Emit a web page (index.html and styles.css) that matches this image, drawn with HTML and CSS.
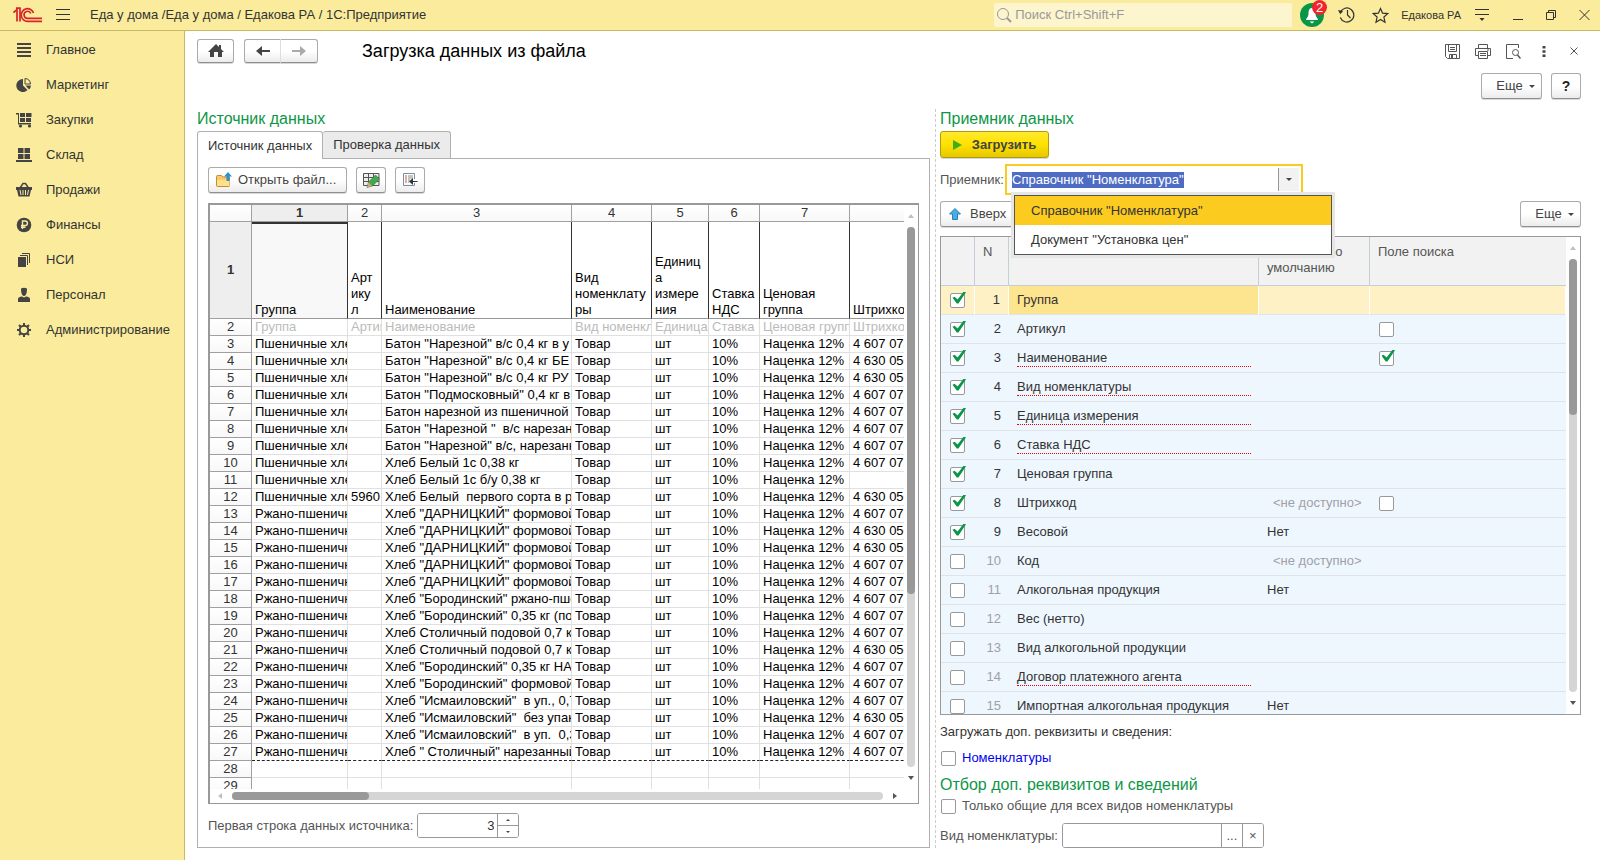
FILE: index.html
```html
<!DOCTYPE html>
<html lang="ru">
<head>
<meta charset="utf-8">
<title>Загрузка данных из файла</title>
<link rel="stylesheet" href="styles.css">
</head>
<body>
<header class="topbar">
  <svg class="logo" width="30" height="16" viewBox="0 0 30 16" fill="none" stroke="#d8232a" stroke-width="1.700"><path d="M.5 5.500 4 2.500V14.500M3 1.200H7V14.500"/><path d="M20.500 6A6.300 6.300 0 1 0 14.800 14.300H29M17.800 6.500A3.500 3.500 0 1 0 14.800 11.300H29"/></svg>
  <button class="plain burger" aria-label="Меню"><svg width="14" height="12" viewBox="0 0 14 12" stroke="#333"><path d="M0 .5H14M0 5.500H14M0 10.500H14"/></svg></button>
  <span class="app-title">Еда у дома /Еда у дома / Едакова РА / 1С:Предприятие</span>
  <label class="search">
    <svg width="16" height="16" viewBox="0 0 16 16" fill="none" stroke="#999"><circle cx="7" cy="7" r="5.500"/><path d="M11 11 15 15" stroke-width="2"/></svg>
    <input type="text" placeholder="Поиск Ctrl+Shift+F" aria-label="Поиск">
  </label>
  <button class="plain bell" aria-label="Оповещения"><svg width="24" height="24" viewBox="0 0 24 24"><circle cx="12" cy="12" r="12" fill="#0a9648"/><path d="M12 5C9 5 8.500 8 8.500 11 8.500 14 6 15 6 17H18C18 15 15.500 14 15.500 11 15.500 8 15 5 12 5ZM9.500 18.500H14.500L12 20.500Z" fill="#fff"/></svg><span class="badge">2</span></button>
  <button class="plain tb-history" aria-label="История"><svg width="18" height="18" viewBox="0 0 18 18" fill="none" stroke="#333" stroke-width="1.200"><path d="M2.300 6.500A7 7 0 1 1 2.300 11.500M9.500 4V9L12.500 12"/><path d="M0 4 5.200 5 2.200 8.200Z" fill="#333" stroke="none"/></svg></button>
  <button class="plain tb-star" aria-label="Избранное"><svg width="17" height="17" viewBox="0 0 17 17" fill="none" stroke="#333" stroke-width="1.200"><path d="M8.500 1.500 10.600 6.200 15.700 6.600 11.900 10 13 15.200 8.500 12.500 4 15.200 5.100 10 1.300 6.600 6.400 6.200Z"/></svg></button>
  <span class="user">Едакова РА</span>
  <button class="plain tb-service" aria-label="Сервис"><svg width="16" height="14" viewBox="0 0 16 14"><path d="M1 1.500H15M1 6.500H15" stroke="#333"/><path d="M5.500 10H10.500L8 13Z" fill="#333"/></svg></button>
  <button class="plain tb-win" aria-label="Свернуть"><svg width="10" height="10" viewBox="0 0 10 10" stroke="#333"><path d="M0 9.500H10"/></svg></button>
  <button class="plain tb-win" aria-label="Восстановить"><svg width="10" height="10" viewBox="0 0 10 10" fill="none" stroke="#333"><path d="M.5 2.500H7.500V9.500H.5ZM2.500 2.500V.5H9.500V7.500H7.500"/></svg></button>
  <button class="plain tb-win" aria-label="Закрыть"><svg width="11" height="10" viewBox="0 0 11 10" stroke="#333"><path d="M.5 0 10.500 10M10.500 0 .5 10"/></svg></button>
</header>
<div class="shell">
  <nav class="sidebar">
    <a href="#"><svg width="16" height="16" viewBox="0 0 16 16" stroke="#444" stroke-width="2"><path d="M1 2H15M1 6H15M1 10H15M1 14H15"/></svg>Главное</a>
    <a href="#"><svg width="16" height="16" viewBox="0 0 16 16" fill="#444"><path d="M7 2V8.500L11.500 13A6.500 6.500 0 1 1 7 2Z"/><path d="M9 7V1.500A6 6 0 0 1 14.500 7Z" fill="none" stroke="#444"/><path d="M9.500 8.500H15A6 6 0 0 1 13 12.500Z"/></svg>Маркетинг</a>
    <a href="#"><svg width="16" height="16" viewBox="0 0 16 16" fill="#444"><path d="M0 1H3V11H15V12.500H2V2.500H0Z"/><path d="M4 1H9V5H4ZM10 1H15.500V5H10ZM4 6H9V10H4ZM10 6H15V10H10Z"/><circle cx="4.500" cy="14" r="1.600"/><circle cx="13.500" cy="14" r="1.600"/></svg>Закупки</a>
    <a href="#"><svg width="16" height="16" viewBox="0 0 16 16" fill="#444"><path d="M2 1H7.500V6H2ZM8.500 1H14V6H8.500ZM2 7H7.500V12H2ZM8.500 7H14V12H8.500ZM0 13H16V15H0Z"/></svg>Склад</a>
    <a href="#"><svg width="16" height="16" viewBox="0 0 16 16"><path d="M4 6 7 1.500H9.500L12.500 6" fill="none" stroke="#444" stroke-width="1.500"/><path d="M0 5H16V8H15L13.500 14.500H2.500L1 8H0Z" fill="#444"/><path d="M4 8 5 13M7 8V13M9.500 8V13M12.500 8 11.500 13" stroke="#faec9c"/></svg>Продажи</a>
    <a href="#"><svg width="16" height="16" viewBox="0 0 16 16"><circle cx="8" cy="8" r="7.300" fill="#444"/><path d="M6.500 12V4H9.200A2.200 2.200 0 0 1 9.200 8.500H5M5 10.300H9.500" fill="none" stroke="#faec9c" stroke-width="1.400"/></svg>Финансы</a>
    <a href="#"><svg width="16" height="16" viewBox="0 0 16 16"><path d="M2 5H10V15H2Z" fill="#444"/><path d="M4 3.500H11.500V13M6 1.500H13.500V11" fill="none" stroke="#444"/></svg>НСИ</a>
    <a href="#"><svg width="16" height="16" viewBox="0 0 16 16" fill="#444"><path d="M5 1.500Q8 0 11 1.500L10.800 5Q10 9 8 9 6 9 5.200 5ZM2 15V12Q2 10 6 9.500L8 10.500 10 9.500Q14 10 14 12V15Z"/></svg>Персонал</a>
    <a href="#"><svg width="16" height="16" viewBox="0 0 16 16" fill="none" stroke="#444"><circle cx="8" cy="8" r="4.300" stroke-width="2"/><path d="M8 1V4M8 12V15M1 8H4M12 8H15M3 3 5 5M11 11 13 13M13 3 11 5M5 11 3 13" stroke-width="2"/></svg>Администрирование</a>
  </nav>
  <main class="page">
    <div class="page-head">
      <button class="btn home" aria-label="Начальная страница"><svg width="16" height="14" viewBox="0 0 16 14" fill="#444"><path d="M8 0 11 3V1H13V5L16 8H14V13H10V8H6V13H2V8H0Z"/></svg></button>
      <div class="nav-pair">
        <button class="btn" aria-label="Назад"><svg width="14" height="12" viewBox="0 0 14 12" fill="#444"><path d="M0 6 6 1V5H14V7H6V11Z"/></svg></button>
        <button class="btn" aria-label="Вперед"><svg width="14" height="12" viewBox="0 0 14 12" fill="#aaa"><path d="M14 6 8 1V5H0V7H8V11Z"/></svg></button>
      </div>
      <h1>Загрузка данных из файла</h1>
      <div class="page-tools">
        <button class="plain" aria-label="Сохранить"><svg width="15" height="15" viewBox="0 0 15 15" fill="none" stroke="#555"><path d="M.5.5H14.500V14.500H2.500L.5 12.500ZM3.500.5V7.500H11.500V.5M5 3.500H10M5 5.500H10M4.500 14V10.500H11.500V14"/><path d="M6 11H8V14H6Z" fill="#555" stroke="none"/></svg></button>
        <button class="plain" aria-label="Печать"><svg width="16" height="15" viewBox="0 0 16 15" fill="none" stroke="#555"><path d="M3.500 4.500V.5H12.500V4.500M3.500 11.500H.5V4.500H15.500V11.500H12.500M3.500 7.500H12.500V14.500H3.500ZM5 9.500H11M5 11.500H11M12 6H14"/></svg></button>
        <button class="plain" aria-label="Просмотр"><svg width="15" height="15" viewBox="0 0 15 15" fill="none" stroke="#555"><path d="M7 14.500H.5V.5H12.500V4"/><circle cx="9.500" cy="8.500" r="3"/><path d="M11.500 11 14.500 14.500" stroke-width="1.500"/></svg></button>
        <button class="plain" aria-label="Еще действия"><svg width="4" height="13" viewBox="0 0 4 13" fill="#444"><path d="M.5 1H3.500V3.500H.5ZM.5 5.200H3.500V7.700H.5ZM.5 9.500H3.500V12H.5Z"/></svg></button>
        <button class="plain" aria-label="Закрыть форму"><svg width="8" height="8" viewBox="0 0 8 8" stroke="#555"><path d="M.5.5 7.500 7.500M7.500.5.5 7.500"/></svg></button>
      </div>
    </div>
    <div class="cmd-row">
      <button class="btn more">Еще <i class="caret"></i></button>
      <button class="btn help">?</button>
    </div>
    <div class="columns">
      <section class="col">
        <h2>Источник данных</h2>
        <div class="tabs" role="tablist">
          <button class="tab active" role="tab" aria-selected="true">Источник данных</button>
          <button class="tab" role="tab" aria-selected="false">Проверка данных</button>
        </div>
        <div class="panel">
          <div class="bar">
            <button class="btn open"><svg width="16" height="16" viewBox="0 0 16 16"><path d="M.5 13.500V4.500Q.5 3.500 1.500 3.500H5.500L7 5H13.500V13.500Q13.500 14.500 12.500 14.500H1.500Q.5 14.500.5 13.500Z" fill="#f9c96a" stroke="#c88a2a"/><path d="M1 8H13.500V14H1Z" fill="#fde08a"/><path d="M12 0 16 4.500H13.500V9H10.500V4.500H8Z" fill="#2f8fd6"/></svg>Открыть файл...</button>
            <button class="btn icon" aria-label="Редактировать"><svg width="17" height="16" viewBox="0 0 17 16"><path d="M.5 1.500H16V13.500H.5ZM.5 5.500H16M.5 9.500H16M5.500 1.500V13.500M10.500 1.500V13.500" fill="#eee" stroke="#555"/><path d="M12.500 3 16.500 7 9.500 14 4 15.500 5.500 10Z" fill="#43a94f" stroke="#27733a" stroke-width=".6"/><path d="M5.500 10 9 14 4 15.500Z" fill="#dca27a"/></svg></button>
            <button class="btn icon" aria-label="Вставить"><svg width="16" height="16" viewBox="0 0 16 16" fill="none"><path d="M12.500 7V1.500H1.500V13.500H12.500V11" stroke="#7a8da6"/><path d="M3 4H5M3 6H5M3 8H5M3 10H5" stroke="#c0603a"/><path d="M6 4H11M6 6H11M6 8H8M6 10H7" stroke="#888"/><path d="M8 9.500H15.500" stroke="#333"/><path d="M11 6V13L7 9.500Z" fill="#333"/></svg></button>
          </div>
          <div class="sheet">
            <div class="sheet-view">
              <table class="grid">
                <colgroup><col class="c0"><col class="c1"><col class="c2"><col class="c3"><col class="c4"><col class="c5"><col class="c6"><col class="c7"><col class="c8"></colgroup>
                <thead id="sheet-head"></thead>
                <tbody id="sheet-body"></tbody>
              </table>
            </div>
            <div class="vscroll"><i class="up"></i><div class="track"><div class="thumb sheet-thumb"></div></div><i class="down"></i></div>
            <div class="hscroll"><i class="left"></i><div class="track"><div class="thumb"></div></div><i class="right"></i></div>
          </div>
          <div class="first-row">
            <label for="first">Первая строка данных источника:</label>
            <div class="spin"><input id="first" type="text" value="3"><div class="spin-btns"><button aria-label="Больше"><i></i></button><button aria-label="Меньше"><i class="dn"></i></button></div></div>
          </div>
        </div>
      </section>
      <div class="splitter"></div>
      <section class="col">
        <h2>Приемник данных</h2>
        <div><button class="btn load"><svg width="9" height="10" viewBox="0 0 9 10"><path d="M0 0 9 5 0 10Z" fill="#3fae1c"/></svg>Загрузить</button></div>
        <div class="target-row">
          <label for="target">Приемник:</label>
          <div class="combo">
            <input id="target" type="text" role="combobox" aria-expanded="true" aria-controls="target-list" value='Справочник "Номенклатура"'>
            <button class="combo-btn" aria-label="Выбрать"><i class="caret"></i></button>
            <ul id="target-list" class="popup" role="listbox">
              <li role="option" aria-selected="true">Справочник "Номенклатура"</li>
              <li role="option" aria-selected="false">Документ "Установка цен"</li>
            </ul>
          </div>
        </div>
        <div class="move-row">
          <button class="btn up-btn"><svg width="12" height="12" viewBox="0 0 12 12"><path d="M6 .5 11.500 6H8.500V11.500H3.500V6H.5Z" fill="#45aee8" stroke="#2a80b8"/></svg>Вверх</button>
          <button class="btn more">Еще <i class="caret"></i></button>
        </div>
        <div class="fields">
          <div class="fields-view">
            <table class="list">
              <colgroup><col class="f0"><col class="f1"><col class="f2"><col class="f3"><col></colgroup>
              <thead><tr><th></th><th>N</th><th aria-label="Реквизит"></th><th>Значение по умолчанию</th><th>Поле поиска</th></tr></thead>
              <tbody id="fields-body"></tbody>
            </table>
          </div>
          <div class="vscroll"><i class="up"></i><div class="track"><div class="thumb fields-thumb"></div></div><i class="down"></i></div>
        </div>
        <p class="note">Загружать доп. реквизиты и сведения:</p>
        <label class="check link"><input type="checkbox">Номенклатуры</label>
        <h2 class="sub">Отбор доп. реквизитов и сведений</h2>
        <label class="check"><input type="checkbox">Только общие для всех видов номенклатуры</label>
        <div class="kind-row">
          <label for="kind">Вид номенклатуры:</label>
          <div class="pick"><input id="kind" type="text"><button aria-label="Выбрать вид">...</button><button aria-label="Очистить">×</button></div>
        </div>
      </section>
    </div>
  </main>
</div>
<script src="app.js"></script>
</body>
</html>
```
FILE: styles.css
```css
* { box-sizing: border-box; }
body { margin: 0; height: 100vh; display: flex; flex-direction: column; background: #fff; color: #333; font: 13px/16px "Liberation Sans", Arial, sans-serif; overflow: hidden; }
button, input { font: inherit; color: inherit; }
svg { display: block; flex: none; }
table { border-collapse: separate; border-spacing: 0; table-layout: fixed; }
.plain { border: 0; background: none; padding: 0; display: flex; align-items: center; justify-content: center; }

.topbar { flex: none; height: 31px; display: flex; align-items: center; background: #faec9c; border-bottom: 1px solid #c8b964; padding: 0 10px 0 13px; }
.burger { margin-left: 13px; }
.app-title { margin-left: 20px; white-space: nowrap; }
.search { margin-left: auto; flex: 0 1 298px; height: 24px; display: flex; align-items: center; gap: 3px; background: #fdf5cd; border-radius: 2px; padding-left: 2px; }
.search input { flex: 1; min-width: 0; border: 0; background: none; outline: 0; padding: 0; }
.search input::placeholder { color: #999; }
.bell { position: relative; margin-left: 8px; }
.badge { position: absolute; right: -3px; top: -3px; width: 15px; height: 15px; border-radius: 8px; background: #f0252d; color: #fff; line-height: 15px; text-align: center; }
.tb-history { margin-left: 14px; }
.tb-star { margin-left: 16px; }
.user { margin-left: 12px; font-size: 11px; white-space: nowrap; }
.tb-service { margin-left: 13px; }
.tb-win { margin-left: 23px; }

.shell { flex: 1; min-height: 0; display: flex; }
.sidebar { flex: none; width: 185px; padding-top: 1px; background: #faec9c; border-right: 1px solid #c8b964; }
.sidebar a { display: flex; align-items: center; gap: 14px; height: 35px; padding-left: 16px; color: #333; text-decoration: none; }

.page { flex: 1; min-width: 0; display: flex; flex-direction: column; padding: 8px 19px 12px 12px; }
.page-head { display: flex; align-items: center; height: 24px; }
.btn { display: inline-flex; align-items: center; justify-content: center; height: 26px; border: 1px solid #ababab; border-bottom-color: #8f8f8f; border-radius: 3px; background: linear-gradient(#fff 50%, #ececec); padding: 0 8px; color: #444; white-space: nowrap; box-shadow: 0 1px 0 #d8d8d8; }
.home { width: 37px; height: 24px; }
.nav-pair { display: flex; margin-left: 10px; }
.nav-pair .btn { width: 37px; height: 24px; border-radius: 3px 0 0 3px; }
.nav-pair .btn + .btn { border-left: 0; border-radius: 0 3px 3px 0; }
.nav-pair .btn:first-child { border-right-color: #ddd; }
h1 { margin: 0 0 0 44px; font-size: 18px; line-height: 24px; font-weight: 400; color: #000; }
.page-tools { margin-left: auto; display: flex; align-items: center; gap: 15px; }
.page-tools .plain { min-width: 15px; }
.cmd-row { display: flex; justify-content: flex-end; gap: 9px; margin-top: 10px; }
.more { width: 61px; gap: 6px; padding: 0 0 0 8px; }
.help { width: 30px; font-weight: 700; font-size: 14px; color: #222; }
.caret { border: 3px solid transparent; border-top-color: #444; border-bottom: 0; }

.columns { flex: 1; min-height: 0; display: grid; grid-template-columns: minmax(0, 733fr) 10px minmax(0, 641fr); margin-top: 10px; }
.col { display: flex; flex-direction: column; min-height: 0; }
.splitter { justify-self: center; border-left: 1px dashed #ccc; }
h2 { margin: 0 0 2px; font-size: 16px; line-height: 20px; font-weight: 400; color: #0e9648; }

.tabs { display: flex; height: 28px; }
.tab { border: 1px solid #b0b0b0; border-radius: 3px 3px 0 0; background: #ebebeb; padding: 0 10px; margin-bottom: 1px; color: #333; }
.tab + .tab { border-left: 0; border-bottom: 0; }
.tab.active { background: #fff; border-bottom: 0; margin-bottom: 0; z-index: 1; }
.panel { flex: 1; min-height: 0; display: flex; flex-direction: column; border: 1px solid #b0b0b0; margin-top: -1px; padding: 8px 10px 9px; }
.bar { display: flex; gap: 9px; }
.open { width: 139px; gap: 6px; justify-content: flex-start; padding: 0 7px; }
.icon { width: 30px; padding: 0; }

.sheet { flex: 1; min-height: 0; display: grid; grid-template: minmax(0, 1fr) 14px / minmax(0, 1fr) 14px; margin-top: 10px; border: 1px solid #999; border-top-width: 2px; border-left-width: 2px; }
.sheet-view { overflow: hidden; }
.grid { width: 800px; color: #000; }
.c0 { width: 42px; } .c1 { width: 96px; } .c2 { width: 34px; } .c3 { width: 190px; } .c4 { width: 80px; } .c5 { width: 57px; } .c6 { width: 51px; } .c7 { width: 90px; }
.grid th, .grid td { height: 17px; padding: 0 0 0 3px; overflow: hidden; white-space: pre; text-align: left; font-weight: 400; line-height: 16px; border-right: 1px solid #e0e0e0; border-bottom: 1px solid #e0e0e0; }
.grid thead th, .grid tbody th { padding: 0; text-align: center; color: #333; border-color: #a0a0a0; background: linear-gradient(#fff, #f8f8f8); }
.grid thead .on, .grid tbody .on { background: #eee; font-weight: 700; }
.grid .caption td { height: 97px; vertical-align: bottom; border-right-color: #333; border-bottom-color: #999; }
.grid .caption .current { background: #f8f8f8; border-top: 2px solid #333; }
.grid .names td { color: #bbb; }
.grid .last td { border-bottom: 1px dashed #222; }

.vscroll { display: flex; flex-direction: column; align-items: center; padding: 9px 0 9px; gap: 9px; }
.hscroll { display: flex; align-items: center; padding: 0 7px 0 8px; gap: 10px; }
.vscroll .track { flex: 1; width: 8px; border-radius: 4px; background: #d5d5d5; }
.hscroll .track { flex: 1; height: 8px; border-radius: 4px; background: #d5d5d5; }
.thumb { height: 100%; width: 100%; border-radius: 4px; background: #999; }
.hscroll .thumb { width: 21%; }
.vscroll .sheet-thumb { height: 68%; }
.vscroll .fields-thumb { height: 36%; }
.up { border: 3px solid transparent; border-top: 0; border-bottom: 4px solid #c0c0c0; }
.down { border: 3px solid transparent; border-bottom: 0; border-top: 4px solid #555; }
.left { border: 3px solid transparent; border-left: 0; border-right: 4px solid #c0c0c0; }
.right { border: 3px solid transparent; border-right: 0; border-left: 4px solid #555; }

.first-row { display: flex; align-items: center; gap: 4px; margin-top: 9px; color: #555; }
.spin, .pick { display: flex; height: 25px; border: 1px solid #999; border-radius: 3px; overflow: hidden; }
.spin input { width: 79px; border: 0; padding: 0 3px; text-align: right; color: #333; outline: 0; }
.spin-btns { width: 21px; display: flex; flex-direction: column; border-left: 1px solid #999; }
.spin-btns button { flex: 1; min-height: 0; border: 0; background: #fff; padding: 0; display: flex; align-items: center; justify-content: center; }
.spin-btns button + button { border-top: 1px solid #999; }
.spin-btns i { border: 2px solid transparent; border-top: 0; border-bottom-color: #444; }
.spin-btns .dn { border-top: 2px solid #444; border-bottom: 0; }

.load { width: 109px; height: 27px; gap: 10px; border-color: #b09a10; background: linear-gradient(#ffea2e, #ffe100 50%, #e6c800); font-weight: 700; }
.target-row { display: flex; align-items: center; margin-top: 6px; color: #555; }
.target-row label { width: 65px; }
.combo { position: relative; width: 298px; height: 31px; display: flex; border: 2px solid #f9ca1f; padding: 2px; background: #fff; }
.combo input { flex: 1; min-width: 0; border: 0; outline: 0; padding: 0 0 0 3px; color: #333; }
.combo input::selection { background: #4f6cc4; color: #fff; }
.combo-btn { width: 21px; border: 0; border-left: 1px solid #999; background: #f2f2f2; padding: 0; display: flex; align-items: center; justify-content: center; }
.popup { position: absolute; z-index: 5; left: 7px; top: 29px; width: 318px; margin: 0; padding: 0; list-style: none; background: #fff; border: 1px solid #555; box-shadow: 0 0 0 3px #e6e6e6; color: #333; }
.popup li { line-height: 29px; padding-left: 16px; }
.popup li[aria-selected="true"] { background: #fbcb20; }
.move-row { display: flex; justify-content: space-between; margin-top: 6px; }
.up-btn { width: 82px; gap: 9px; justify-content: flex-start; }

.fields { flex: 1; min-height: 0; display: grid; grid-template-columns: minmax(0, 1fr) 14px; margin-top: 9px; border: 1px solid #999; }
.fields-view { overflow: hidden; background: #eff7fe; }
.list { width: 100%; }
.f0, .f1 { width: 34px; } .f2 { width: 250px; } .f3 { width: 111px; }
.list th { height: 49px; padding: 7px 8px 0; vertical-align: top; text-align: left; font-weight: 400; color: #555; background: #f2f2f2; border-right: 1px solid #c5cdd5; border-bottom: 1px solid #c5cdd5; }
.list th:last-child { border-right: 0; }
.list td { height: 29px; padding: 0 8px; vertical-align: middle; border-bottom: 1px solid #e0e4e8; }
.list td:nth-child(2) { text-align: right; }
.list .off td:nth-child(2), .list .none { color: #a0a0a8; }
.list td.none { padding-left: 14px; }
.list .name { display: block; line-height: 17px; border-bottom: 1px solid transparent; white-space: nowrap; }
.list .req { border-bottom: 1px dotted #f00000; }
.list .picked td { background: #fef1c6; border-right: 1px solid #fff; }
.list .picked td:nth-child(3) { background: #fde48f; }

input[type="checkbox"] { appearance: none; flex: none; display: block; position: relative; width: 15px; height: 15px; margin: 0; border: 1px solid #999; border-radius: 2px; background: #fff; }
input[type="checkbox"]:checked::after { content: ""; position: absolute; left: 1px; top: -2px; width: 14px; height: 13px; background: #0a9648; clip-path: polygon(4% 48%, 18% 40%, 40% 62%, 84% 0, 100% 6%, 46% 92%, 34% 92%); }
.list input { margin-left: 1px; }
.note { margin: 9px 0 10px; }
.check { display: flex; align-items: center; gap: 6px; color: #555; padding-left: 1px; }
.check.link { color: #0000f0; }
h2.sub { margin: 9px 0 3px; }
.kind-row { display: flex; align-items: center; gap: 4px; margin-top: 9px; color: #555; }
.pick { width: 202px; }
.pick input { flex: 1; min-width: 0; border: 0; outline: 0; }
.pick button { width: 21px; border: 0; border-left: 1px solid #999; background: #fff; padding: 0; }
```
FILE: app.js
```js
const make = (tag, text, cls) => {
  const el = document.createElement(tag);
  if (text !== undefined) el.textContent = text;
  if (cls) el.className = cls;
  return el;
};

const head = make('tr');
['', '1', '2', '3', '4', '5', '6', '7', ''].forEach((t, i) => head.append(make('th', t, i === 1 ? 'on' : '')));
document.getElementById('sheet-head').append(head);

const body = document.getElementById('sheet-body');
const addRow = (n, cells, cls) => {
  const tr = make('tr', undefined, cls);
  tr.append(make('th', n, n === 1 ? 'on' : ''));
  cells.forEach((t, i) => tr.append(make('td', t, n === 1 && i === 0 ? 'current' : '')));
  body.append(tr);
};
addRow(1, ['Группа', 'Арт\nику\nл', 'Наименование', 'Вид\nноменклату\nры', 'Единиц\nа\nизмере\nния', 'Ставка\nНДС', 'Ценовая\nгруппа', 'Штрихкод'], 'caption');
addRow(2, ['Группа', 'Артикул', 'Наименование', 'Вид номенклатуры', 'Единица измерения', 'Ставка НДС', 'Ценовая группа', 'Штрихкод'], 'names');

const A = '4 607 073', B = '4 630 056';
const goods = [
  ['Батон "Нарезной" в/с 0,4 кг в у', A],
  ['Батон "Нарезной" в/с 0,4 кг БЕ', B],
  ['Батон "Нарезной" в/с 0,4 кг РУ', B],
  ['Батон "Подмосковный" 0,4 кг в', A],
  ['Батон нарезной из пшеничной м', A],
  ['Батон "Нарезной "  в/с нарезан', A],
  ['Батон "Нарезной" в/с, нарезанн', A],
  ['Хлеб Белый 1с 0,38 кг', A],
  ['Хлеб Белый 1с б/у 0,38 кг', ''],
  ['Хлеб Белый  первого сорта в ру', B],
  ['Хлеб "ДАРНИЦКИЙ" формовой', A],
  ['Хлеб "ДАРНИЦКИЙ" формовой', B],
  ['Хлеб "ДАРНИЦКИЙ" формовой', B],
  ['Хлеб "ДАРНИЦКИЙ" формовой', A],
  ['Хлеб "ДАРНИЦКИЙ" формовой', A],
  ['Хлеб "Бородинский" ржано-пше', A],
  ['Хлеб "Бородинский" 0,35 кг (по', A],
  ['Хлеб Столичный подовой 0,7 кг', A],
  ['Хлеб Столичный подовой 0,7 кг', B],
  ['Хлеб "Бородинский" 0,35 кг НА', A],
  ['Хлеб "Бородинский" формовой', A],
  ['Хлеб "Исмаиловский"  в уп., 0,7', A],
  ['Хлеб "Исмаиловский"  без упак', B],
  ['Хлеб "Исмаиловский"  в уп.  0,3', A],
  ['Хлеб " Столичный" нарезанный', A]
];
goods.forEach(([name, code], i) => addRow(i + 3, [
  i < 10 ? 'Пшеничные хле' : 'Ржано-пшеничн', i === 9 ? '5960' : '', name,
  'Товар', 'шт', '10%', 'Наценка 12%', code
], i === goods.length - 1 ? 'last' : ''));
addRow(28, Array(8).fill(''));
addRow(29, Array(8).fill(''));

const NA = '<не доступно>';
const fields = [
  ['Группа', 1, 0, ''], ['Артикул', 1, 0, '', false], ['Наименование', 1, 1, '', true],
  ['Вид номенклатуры', 1, 1, ''], ['Единица измерения', 1, 1, ''], ['Ставка НДС', 1, 1, ''],
  ['Ценовая группа', 1, 0, ''], ['Штрихкод', 1, 0, NA, false], ['Весовой', 1, 0, 'Нет'],
  ['Код', 0, 0, NA], ['Алкогольная продукция', 0, 0, 'Нет'], ['Вес (нетто)', 0, 0, ''],
  ['Вид алкогольной продукции', 0, 0, ''], ['Договор платежного агента', 0, 1, ''],
  ['Импортная алкогольная продукция', 0, 0, 'Нет']
];
const box = (checked, label) => {
  const input = make('input');
  input.type = 'checkbox';
  input.checked = checked;
  input.setAttribute('aria-label', label);
  return input;
};
fields.forEach(([name, on, required, value, search], i) => {
  const tr = make('tr', undefined, (on ? '' : 'off') + (i === 0 ? 'picked' : ''));
  const use = make('td');
  use.append(box(!!on, name));
  const title = make('td');
  title.append(make('span', name, required ? 'name req' : 'name'));
  const find = make('td');
  if (search !== undefined) find.append(box(search, 'Поиск: ' + name));
  tr.append(use, make('td', i + 1), title, make('td', value, value === NA ? 'none' : ''), find);
  document.getElementById('fields-body').append(tr);
});

const target = document.getElementById('target');
target.focus();
target.select();
```
